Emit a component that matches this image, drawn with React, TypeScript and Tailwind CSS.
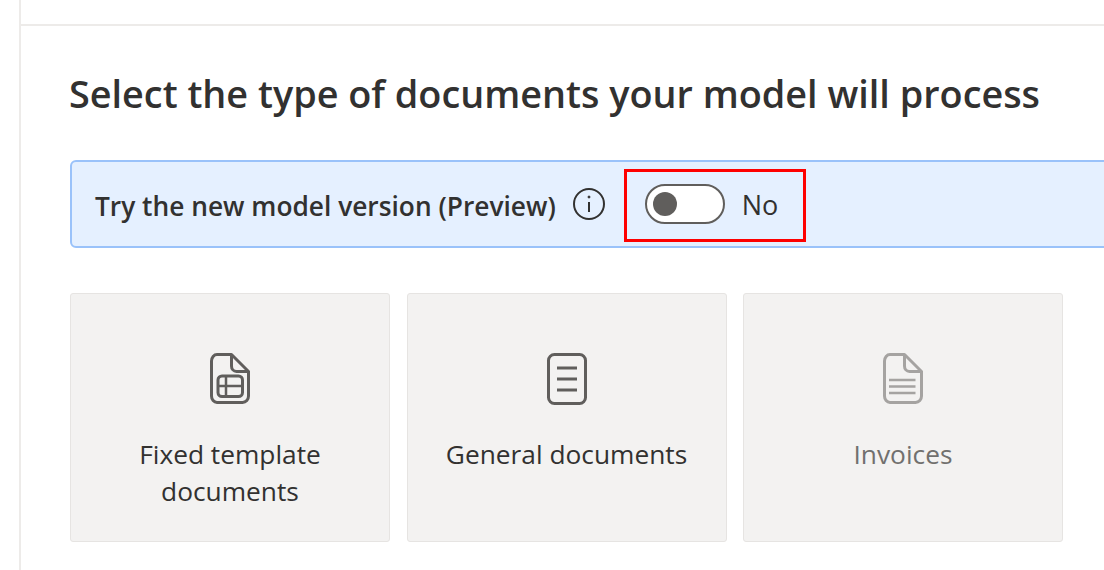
import React from 'react';

const sans = "font-['Open_Sans','Noto_Sans',sans-serif]";

const TemplateIcon = () => (
  <svg width="40" height="52" viewBox="0 0 40 52" fill="none" stroke="#605e5c" strokeWidth="3">
    <path d="M7 1.500H21.500L38.500 18.500V43C38.500 46.500 36 49.500 32.500 49.500H7C4 49.500 1.500 46.500 1.500 43V8C1.500 4.500 4 1.500 7 1.500Z" strokeLinejoin="round" />
    <path d="M21.500 1.500V13C21.500 16 23.500 18.500 26.500 18.500H38.500" />
    <rect x="8" y="23" width="24.500" height="20.500" rx="4" />
    <path d="M8 33H32.500M16 23V43.500" strokeWidth="2.500" />
  </svg>
);

const GeneralIcon = () => (
  <svg width="40" height="52" viewBox="0 0 40 52" fill="none" stroke="#605e5c" strokeWidth="3">
    <rect x="1.500" y="1.500" width="37" height="49" rx="6" />
    <path d="M10 15H30M10 26H30M10 37H30" strokeWidth="3" />
  </svg>
);

const InvoiceIcon = () => (
  <svg width="40" height="52" viewBox="0 0 40 52" fill="none" stroke="#a5a3a1" strokeWidth="3">
    <path d="M7 1.500H21.500L38.500 18.500V43C38.500 46.500 36 49.500 32.500 49.500H7C4 49.500 1.500 46.500 1.500 43V8C1.500 4.500 4 1.500 7 1.500Z" strokeLinejoin="round" />
    <path d="M21.500 1.500V13C21.500 16 23.500 18.500 26.500 18.500H38.500" />
    <path d="M6 27H32.500M6 33.500H32.500M6 40H32.500" strokeWidth="2.500" />
  </svg>
);

const cards = [
  { title: 'Fixed template documents', icon: <TemplateIcon />, muted: false },
  { title: 'General documents', icon: <GeneralIcon />, muted: false },
  { title: 'Invoices', icon: <InvoiceIcon />, muted: true },
];

const App = () => {
  return (
    <div className={`h-[570px] w-[1104px] overflow-hidden bg-white ${sans}`}>
      <div className="ml-[19px] h-full border-l-2 border-[#edebe9]">
        <div className="h-[26px] border-b-2 border-[#edebe9]" />
        <div className="pl-[49px]">
          <h1 className="mt-[42px] -ml-px whitespace-nowrap text-[37.8px] leading-[52px] font-semibold text-[#323130]">
            Select the type of documents your model will process
          </h1>

          <div className="mt-[40px] flex h-[88px] w-[1100px] items-center rounded-l-md border-2 border-[#9ac2fa] bg-[#e5f0ff] pl-[23px]">
            <span className="mt-[4px] whitespace-nowrap text-[26.3px] leading-[36px] font-semibold text-[#323130]">Try the new model version (Preview)</span>
            <svg className="ml-[17px]" width="32" height="32" viewBox="0 0 32 32" fill="none" stroke="#323130" strokeWidth="2">
              <circle cx="16" cy="16" r="15" />
              <path d="M16 14V24" />
              <circle cx="16" cy="9" r="1" fill="#323130" strokeWidth="1" />
            </svg>
            <div className="mt-[3px] ml-[19px] flex h-[73px] w-[182px] items-center border-[3px] border-[#fe0000] pl-[18px]">
              <div className="-mt-[3px] flex h-[40px] w-[80px] items-center rounded-full border-2 border-[#605e5c] bg-white pl-[6px]">
                <div className="h-[24px] w-[24px] rounded-full bg-[#605e5c]" />
              </div>
              <span className="ml-[17px] text-[27px] text-[#323130]">No</span>
            </div>
          </div>

          <div className="mt-[45px] flex gap-[16.5px]">
            {cards.map((card) => (
              <div key={card.title} className="flex h-[249px] w-[320px] flex-col items-center rounded-[3px] border border-[#e6e4e2] bg-[#f3f2f1] pt-[59px]">
                {card.icon}
                <p className={`mt-[31px] w-[250px] text-center text-[26.3px] leading-[37px] ${card.muted ? 'text-[#71706e]' : 'text-[#323130]'}`}>
                  {card.title}
                </p>
              </div>
            ))}
          </div>
        </div>
      </div>
    </div>
  );
};

export default App;
